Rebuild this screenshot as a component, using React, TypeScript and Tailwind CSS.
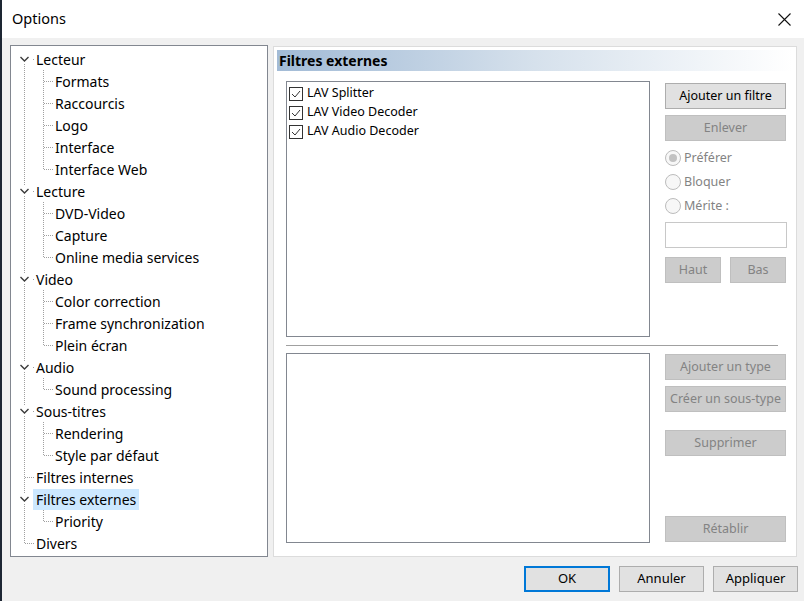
import React from "react";

type RowKind = "parent" | "child" | "childLast" | "leaf" | "leafLast";
type Row = { label: string; kind: RowKind; first?: boolean; selected?: boolean };

const rows: Row[] = [
  { label: "Lecteur", kind: "parent", first: true },
  { label: "Formats", kind: "child" },
  { label: "Raccourcis", kind: "child" },
  { label: "Logo", kind: "child" },
  { label: "Interface", kind: "child" },
  { label: "Interface Web", kind: "childLast" },
  { label: "Lecture", kind: "parent" },
  { label: "DVD-Video", kind: "child" },
  { label: "Capture", kind: "child" },
  { label: "Online media services", kind: "childLast" },
  { label: "Video", kind: "parent" },
  { label: "Color correction", kind: "child" },
  { label: "Frame synchronization", kind: "child" },
  { label: "Plein écran", kind: "childLast" },
  { label: "Audio", kind: "parent" },
  { label: "Sound processing", kind: "childLast" },
  { label: "Sous-titres", kind: "parent" },
  { label: "Rendering", kind: "child" },
  { label: "Style par défaut", kind: "childLast" },
  { label: "Filtres internes", kind: "leaf" },
  { label: "Filtres externes", kind: "parent", selected: true },
  { label: "Priority", kind: "childLast" },
  { label: "Divers", kind: "leafLast" },
];

const dot = { stroke: "#a0a0a0", strokeWidth: 1, strokeDasharray: "1 1", shapeRendering: "crispEdges" as const };

function Connector({ kind, first }: { kind: RowKind; first?: boolean }) {
  const isChild = kind === "child" || kind === "childLast";
  return (
    <svg width={isChild ? 44 : 25} height={22} className="shrink-0" viewBox={`0 0 ${isChild ? 44 : 25} 22`}>
      {kind === "parent" && (
        <>
          {!first && <line x1={13.5} y1={0} x2={13.5} y2={6} {...dot} />}
          <line x1={13.5} y1={16} x2={13.5} y2={22} {...dot} />
          <path d="M9.5 9 L13.5 13 L17.5 9" fill="none" stroke="#3c3c3c" strokeWidth={1.4} />
          <rect x={22} y={11} width={1} height={1} fill="#a0a0a0" />
        </>
      )}
      {isChild && (
        <>
          <line x1={13.5} y1={0} x2={13.5} y2={22} {...dot} />
          <line x1={32.5} y1={0} x2={32.5} y2={kind === "childLast" ? 11 : 22} {...dot} />
          <line x1={33} y1={11.5} x2={42} y2={11.5} {...dot} />
        </>
      )}
      {(kind === "leaf" || kind === "leafLast") && (
        <>
          <line x1={13.5} y1={0} x2={13.5} y2={kind === "leafLast" ? 11 : 22} {...dot} />
          <line x1={14} y1={11.5} x2={24} y2={11.5} {...dot} />
        </>
      )}
    </svg>
  );
}

function Btn({ children, disabled, className = "" }: { children: React.ReactNode; disabled?: boolean; className?: string }) {
  return (
    <div
      className={`flex items-center justify-center border text-[12.5px] ${
        disabled ? "bg-[#cccccc] border-[#bfbfbf] text-[#838383]" : "bg-[#e1e1e1] border-[#adadad] text-black"
      } ${className}`}
    >
      {children}
    </div>
  );
}

function Check({ label }: { label: string }) {
  return (
    <div className="flex h-[19px] items-center">
      <div className="ml-[2px] flex h-[14px] w-[14px] items-center justify-center border border-[#333333] bg-white">
        <svg width="10" height="10" viewBox="0 0 10 10">
          <path d="M1 5 L4 8 L9 2" fill="none" stroke="#333333" strokeWidth={1} />
        </svg>
      </div>
      <span className="ml-[4px] text-[12.5px] text-black">{label}</span>
    </div>
  );
}

function Radio({ label, filled }: { label: string; filled?: boolean }) {
  return (
    <div className="flex h-[24px] items-center">
      <div className="flex h-[16px] w-[16px] items-center justify-center rounded-full border border-[#bcbcbc] bg-[#f7f7f7]">
        {filled && <div className="h-[8px] w-[8px] rounded-full bg-[#c2c2c2]" />}
      </div>
      <span className="ml-[3px] text-[12.5px] text-[#838383]">{label}</span>
    </div>
  );
}

export default function App() {
  return (
    <div
      className="flex h-[601px] w-[804px] overflow-hidden"
      style={{ fontFamily: '"Noto Sans", "Segoe UI", sans-serif' }}
    >
      <div className="w-[2px] shrink-0 bg-[#1d2633]" />
      <div className="flex flex-1 flex-col">
        <div className="flex h-[38px] shrink-0 items-center justify-between bg-white pl-[10px] pr-[13px]">
          <span className="text-[14.5px] text-black">Options</span>
          <svg width="13" height="13" viewBox="0 0 13 13">
            <path d="M0.5 0.5 L12.5 12.5 M12.5 0.5 L0.5 12.5" stroke="#111" strokeWidth={1.1} />
          </svg>
        </div>
        <div className="flex flex-1 flex-col bg-[#f0f0f0]">
          <div className="flex pl-[8px] pt-[7px]">
            {/* Tree */}
            <div className="h-[512px] w-[258px] border border-[#828790] bg-white pt-[2px]">
              {rows.map((r) => {
                const isChild = r.kind === "child" || r.kind === "childLast";
                return (
                  <div key={r.label} className="flex h-[22px] items-center">
                    <Connector kind={r.kind} first={r.first} />
                    <span
                      className={`flex h-[21px] items-center text-[14px] text-black ${
                        r.selected ? "bg-[#cce8ff]" : ""
                      } ${isChild ? "ml-[-1px] pl-[1px] pr-1" : "ml-[-3px] pl-[3px] pr-[3px]"}`}
                    >
                      {r.label}
                    </span>
                  </div>
                );
              })}
            </div>
            {/* Right panel */}
            <div className="ml-[5px] mt-px flex h-[511px] w-[524px] flex-col border border-[#dcdcdc] bg-white p-[3px]">
              <div className="flex h-[21px] items-center bg-gradient-to-r from-[#a2bbd6] via-[#d6e1ec] to-[#ffffff] pl-[2px] text-[14px] font-bold text-black">
                Filtres externes
              </div>
              <div className="ml-[9px] mt-[10px] flex">
                <div className="h-[256px] w-[364px] border border-[#828790] bg-white pt-[2px]">
                  <Check label="LAV Splitter" />
                  <Check label="LAV Video Decoder" />
                  <Check label="LAV Audio Decoder" />
                </div>
                <div className="ml-[15px] flex w-[121px] flex-col pt-[2px]">
                  <Btn className="h-[26px]">Ajouter un filtre</Btn>
                  <Btn disabled className="mt-[6px] h-[26px]">Enlever</Btn>
                  <div className="mt-[5px] flex flex-col">
                    <Radio label="Préférer" filled />
                    <Radio label="Bloquer" />
                    <Radio label="Mérite :" />
                  </div>
                  <div className="mt-[4px] h-[26px] w-[122px] border border-[#c8c8c8] bg-white" />
                  <div className="mt-[9px] flex justify-between">
                    <Btn disabled className="h-[26px] w-[56px]">Haut</Btn>
                    <Btn disabled className="h-[26px] w-[56px]">Bas</Btn>
                  </div>
                </div>
              </div>
              <div className="ml-[9px] mt-[8px] h-[2px] w-[492px] border-t border-[#a0a0a0] border-b-white" />
              <div className="ml-[9px] mt-[6px] flex">
                <div className="h-[190px] w-[364px] border border-[#828790] bg-white" />
                <div className="ml-[15px] flex w-[121px] flex-col pt-px">
                  <Btn disabled className="h-[26px]">Ajouter un type</Btn>
                  <Btn disabled className="mt-[6px] h-[26px]">Créer un sous-type</Btn>
                  <Btn disabled className="mt-[18px] h-[26px]">Supprimer</Btn>
                  <Btn disabled className="mt-[60px] h-[26px]">Rétablir</Btn>
                </div>
              </div>
            </div>
          </div>
          <div className="mt-[9px] flex justify-end pr-[6px]">
            <div className="flex h-[26px] w-[86px] items-center justify-center border-2 border-[#0078d7] bg-[#e1e1e1] text-[13px] text-black">
              OK
            </div>
            <div className="ml-[9px] flex h-[26px] w-[85px] items-center justify-center border border-[#adadad] bg-[#e1e1e1] text-[13px] text-black">
              Annuler
            </div>
            <div className="ml-[9px] flex h-[26px] w-[85px] items-center justify-center border border-[#adadad] bg-[#e1e1e1] text-[13px] text-black">
              Appliquer
            </div>
          </div>
        </div>
      </div>
    </div>
  );
}
